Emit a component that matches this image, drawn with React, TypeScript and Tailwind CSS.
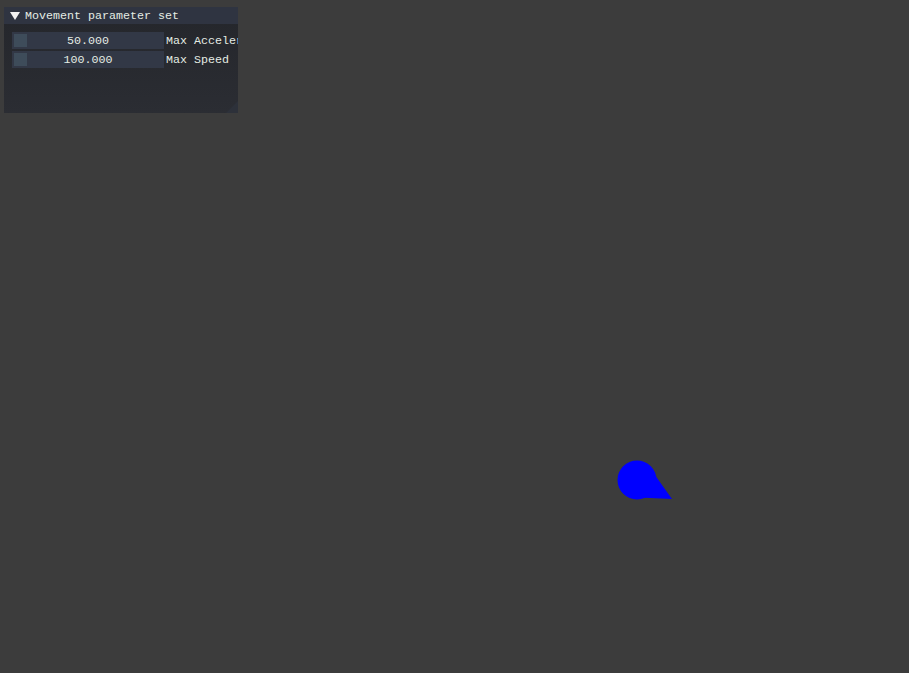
const rows = [
  { value: '50.000', label: 'Max Acceleration' },
  { value: '100.000', label: 'Max Speed' },
];

const App = () => {
  return (
    <div
      className="relative w-[909px] h-[673px] overflow-hidden bg-[#3c3c3c] text-[#e4ece4]"
      style={{ fontFamily: '"Liberation Mono", "DejaVu Sans Mono", monospace' }}
    >
      {/* parameter window */}
      <div className="absolute left-[4px] top-[7px] w-[234px] h-[106px] flex flex-col overflow-hidden bg-gradient-to-b from-[#24262b] to-[#2b2d33]">
        <div className="h-[17px] flex items-center bg-[#2f3441] text-[11.67px] leading-none">
          <svg width="10" height="9" viewBox="0 0 10 9" className="ml-[6px] mr-[5px] mt-[1px]">
            <polygon points="0,0 10,0 5,8" fill="#f2f2f2" />
          </svg>
          <span className="whitespace-nowrap pt-[3px]">Movement parameter set</span>
        </div>
        <div className="flex flex-col gap-[2px] pl-[8px] pt-[8px]">
          {rows.map((row) => (
            <div key={row.label} className="flex items-center h-[17px] whitespace-nowrap text-[11.67px] leading-none">
              <div className="relative w-[152px] h-[17px] flex items-center justify-center bg-[#323846] shrink-0">
                <div className="absolute left-[2px] top-[2px] w-[13px] h-[13px] bg-[#3e4c5a]" />
                <span className="pt-[2px]">{row.value}</span>
              </div>
              <span className="ml-[2px] pt-[2px]">{row.label}</span>
            </div>
          ))}
        </div>
        <div className="flex-1" />
        <svg width="12" height="12" viewBox="0 0 12 12" className="absolute right-0 bottom-0">
          <polygon points="12,0 12,12 0,12" fill="#2d313a" />
        </svg>
      </div>

      {/* agent */}
      <svg width="909" height="673" className="absolute left-0 top-0 pointer-events-none">
        <circle cx="637" cy="480" r="19.5" fill="#0000ff" />
        <polygon points="627.7,497.1 646.3,462.9 672,499" fill="#0000ff" />
      </svg>
    </div>
  );
};

export default App;
